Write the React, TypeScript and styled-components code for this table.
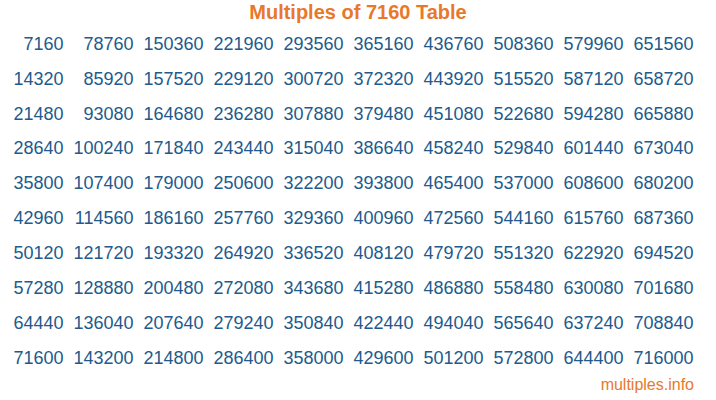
import React from 'react';
import styled, { createGlobalStyle } from 'styled-components';

const BASE = 7160;
const COLS = 10;
const ROWS = 10;

const GlobalStyle = createGlobalStyle`
  html, body {
    margin: 0;
    padding: 0;
    background: #ffffff;
  }
`;

const Page = styled.div`
  width: 716px;
  height: 400px;
  overflow: hidden;
  font-family: 'Liberation Sans', Arial, Helvetica, sans-serif;
  display: flex;
  flex-direction: column;
`;

const Title = styled.h1`
  margin: 0;
  height: 24px;
  line-height: 24px;
  font-size: 20px;
  font-weight: 700;
  text-align: center;
  color: #e8782a;
`;

const Grid = styled.div`
  margin-top: 2.8px;
  display: grid;
  grid-template-columns: repeat(${COLS}, 70px);
  grid-template-rows: repeat(${ROWS}, 34.9px);
  grid-auto-flow: column;
`;

const Cell = styled.div`
  font-size: 18px;
  line-height: 34.9px;
  text-align: right;
  padding-right: 6.5px;
  color: #235a8c;
  white-space: nowrap;
`;

const Footer = styled.div`
  font-size: 16px;
  line-height: 18px;
  text-align: right;
  padding-right: 22px;
  color: #e8782a;
`;

export default function App() {
  const values = Array.from({ length: COLS * ROWS }, (_, i) => (i + 1) * BASE);
  return (
    <Page>
      <GlobalStyle />
      <Title>Multiples of {BASE} Table</Title>
      <Grid>
        {values.map((v) => (
          <Cell key={v}>{v}</Cell>
        ))}
      </Grid>
      <Footer>multiples.info</Footer>
    </Page>
  );
}
